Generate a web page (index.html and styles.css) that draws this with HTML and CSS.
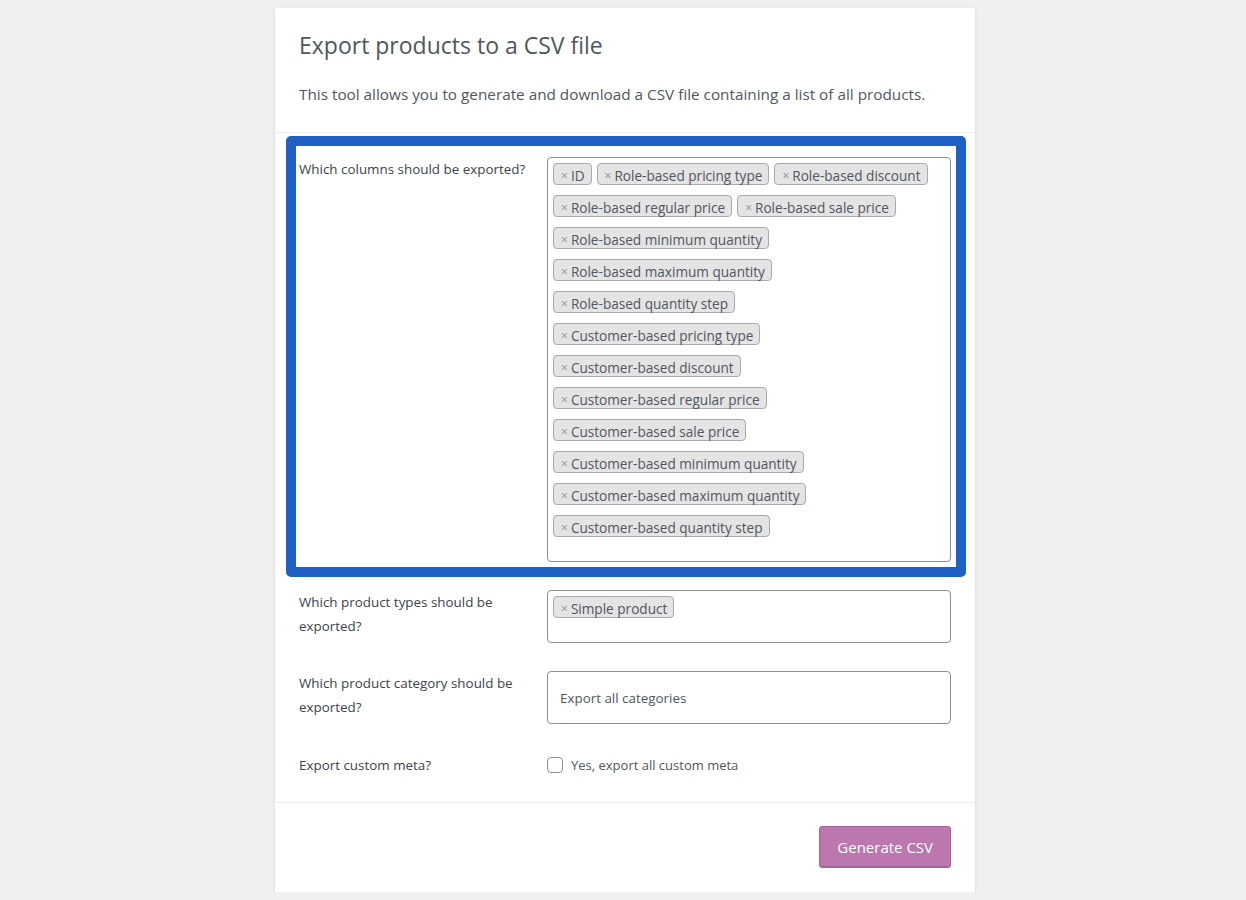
FILE: index.html
```html
<!DOCTYPE html>
<html>
  <head>
    <meta charset="UTF-8">
    <meta name="viewport" content="width=device-width, initial-scale=1.0">
    <title>Export Products</title>
    <link rel="stylesheet" href="styles.css">
  </head>

  <body>
    <div class="exporter">
      <header class="exporter-header">
        <h2 class="exporter-title">Export products to a CSV file</h2>
        <p class="exporter-desc">This tool allows you to generate and download a CSV file containing a list of all products.</p>
      </header>

      <div class="exporter-form">
        <div class="form-row form-row-highlight">
          <label class="form-label">Which columns should be exported?</label>
          <div class="select-box">
            <span class="tag"><span class="tag-x">×</span>ID</span>
            <span class="tag"><span class="tag-x">×</span>Role-based pricing type</span>
            <span class="tag"><span class="tag-x">×</span>Role-based discount</span>
            <span class="tag"><span class="tag-x">×</span>Role-based regular price</span>
            <span class="tag"><span class="tag-x">×</span>Role-based sale price</span>
            <span class="tag"><span class="tag-x">×</span>Role-based minimum quantity</span>
            <span class="tag"><span class="tag-x">×</span>Role-based maximum quantity</span>
            <span class="tag"><span class="tag-x">×</span>Role-based quantity step</span>
            <span class="tag"><span class="tag-x">×</span>Customer-based pricing type</span>
            <span class="tag"><span class="tag-x">×</span>Customer-based discount</span>
            <span class="tag"><span class="tag-x">×</span>Customer-based regular price</span>
            <span class="tag"><span class="tag-x">×</span>Customer-based sale price</span>
            <span class="tag"><span class="tag-x">×</span>Customer-based minimum quantity</span>
            <span class="tag"><span class="tag-x">×</span>Customer-based maximum quantity</span>
            <span class="tag"><span class="tag-x">×</span>Customer-based quantity step</span>
          </div>
        </div>

        <div class="form-row form-row-types">
          <label class="form-label">Which product types should be exported?</label>
          <div class="select-box">
            <span class="tag"><span class="tag-x">×</span>Simple product</span>
          </div>
        </div>

        <div class="form-row form-row-category">
          <label class="form-label">Which product category should be exported?</label>
          <div class="select-box select-placeholder">Export all categories</div>
        </div>

        <div class="form-row form-row-meta">
          <label class="form-label">Export custom meta?</label>
          <label class="checkbox-label"><span class="checkbox"></span>Yes, export all custom meta</label>
        </div>
      </div>

      <div class="exporter-footer">
        <button class="button-primary">Generate CSV</button>
      </div>
    </div>
  </body>
</html>
```

FILE: styles.css
```css
* {
  box-sizing: border-box;
}

body {
  margin: 0;
  padding-left: 4px;
  background: #f0f0f1;
  font-family: "Open Sans", "Noto Sans", sans-serif;
  color: #50575e;
}

.exporter {
  width: 700px;
  margin: 8px auto 0;
  background: #fff;
  box-shadow: 0 1px 3px rgba(0, 0, 0, 0.13);
}

.exporter-header {
  padding: 21px 24px 0;
  height: 125px;
  border-bottom: 1px solid #eee;
}

.exporter-title {
  margin: 0;
  font-size: 23px;
  font-weight: 400;
  line-height: 32px;
  color: #50575e;
}

.exporter-desc {
  margin: 21px 0 0;
  font-size: 15.3px;
  line-height: 24px;
  color: #50575e;
}

.exporter-form {
  padding: 3px 0 25px;
  border-bottom: 1px solid #eee;
}

.form-row {
  display: grid;
  grid-template-columns: 248px 404px;
  padding: 0 24px;
}

.form-row-highlight {
  margin: 0 9px 0 11px;
  padding: 11px 5px 5px 3px;
  border: 10px solid #1f60c4;
  border-radius: 5px;
}

.form-row-types {
  margin-top: 13px;
}

.form-row-category {
  margin-top: 28px;
}

.form-row-meta {
  margin-top: 29px;
}

.form-label {
  font-size: 13.4px;
  line-height: 24px;
  padding-right: 12px;
  color: #3c434a;
}

.select-box {
  display: flex;
  flex-wrap: wrap;
  align-content: flex-start;
  gap: 10px 5px;
  min-height: 53px;
  padding: 5px 5px 24px;
  border: 1px solid #8c8f94;
  border-radius: 4px;
}

.select-placeholder {
  flex-wrap: nowrap;
  align-items: center;
  padding: 0 12px;
  font-size: 13.4px;
  color: #50575e;
}

.tag {
  display: inline-flex;
  align-items: center;
  height: 22px;
  padding: 3px 6px 0 7px;
  background: #e4e4e4;
  border: 1px solid #aaa;
  border-radius: 4px;
  font-size: 13.6px;
  color: #50575e;
  white-space: nowrap;
}

.tag-x {
  margin-right: 3px;
  font-size: 12px;
  color: #8c8f94;
}

.checkbox-label {
  display: flex;
  align-items: center;
  height: 24px;
  font-size: 13px;
  color: #50575e;
}

.checkbox {
  width: 16px;
  height: 16px;
  margin-right: 8px;
  border: 1px solid #8c8f94;
  border-radius: 4px;
}

.exporter-footer {
  display: flex;
  justify-content: flex-end;
  padding: 23px 24px 24px;
}

.button-primary {
  height: 42px;
  padding: 0 17px;
  background: #bb77ae;
  border: 1px solid #a36597;
  border-radius: 3px;
  box-shadow: inset 0 -1px 0 #a36597;
  font-family: inherit;
  font-size: 15px;
  color: #fff;
}
```
